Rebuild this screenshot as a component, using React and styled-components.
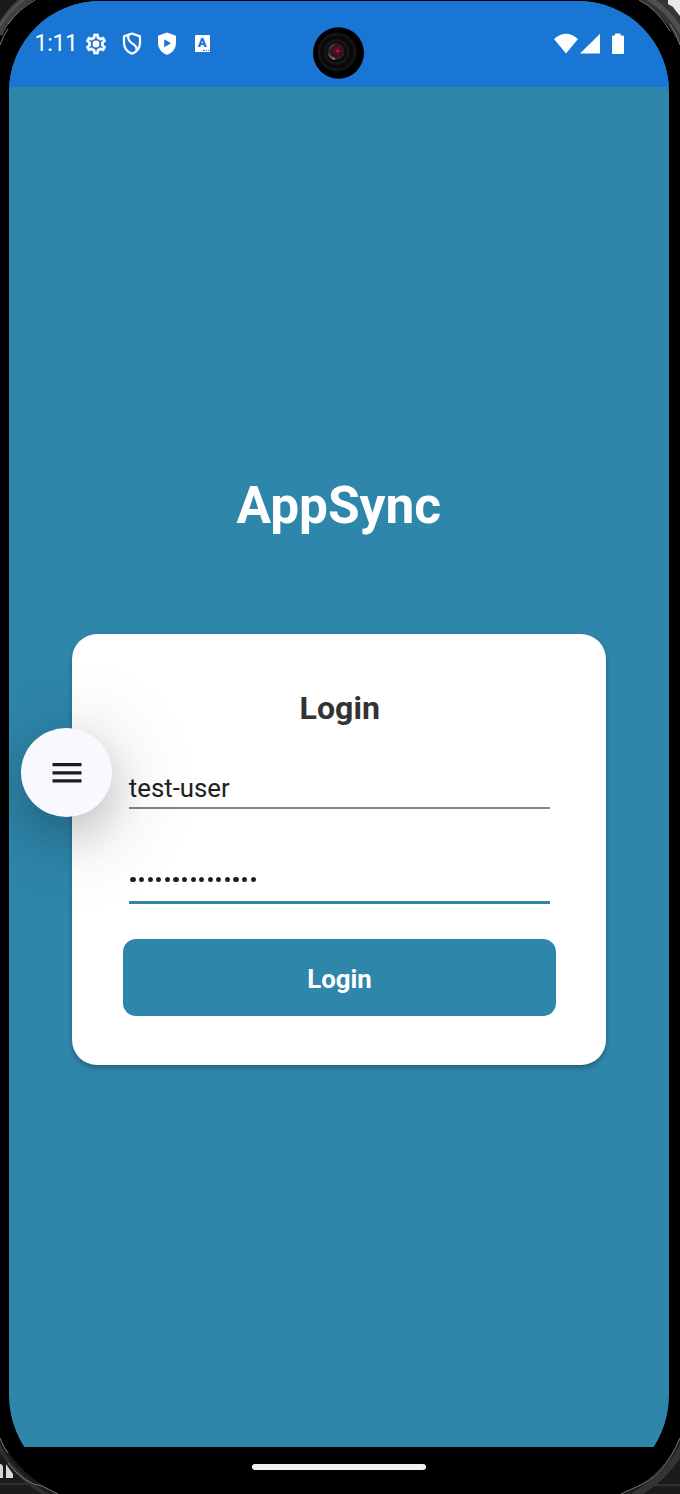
import React from "react";
import styled, { createGlobalStyle } from "styled-components";

const GlobalStyle = createGlobalStyle`
  * { box-sizing: border-box; }
  html, body { margin: 0; padding: 0; background: #000; overflow: hidden; }
  body { font-family: Roboto, "Liberation Sans", sans-serif; }
`;

const Device = styled.div`
  position: relative;
  width: 680px;
  height: 1494px;
  padding: 0.5px 11px 0 8.5px;
  background: #000;
  overflow: hidden;
`;

const Clip = styled.div`
  height: 1446.5px;
  overflow: hidden;
`;

const Screen = styled.div`
  display: flex;
  flex-direction: column;
  height: 1490px;
  border-radius: 91px 91px 96px 96px;
  overflow: hidden;
  background: #2e86ab;
`;

const StatusBar = styled.header`
  flex: none;
  display: flex;
  justify-content: space-between;
  height: 86.5px;
  padding: 30px 44px 0 26px;
  background: #1976d4;
  color: #fff;
`;

const StatusGroup = styled.div`
  display: flex;
  align-items: center;
  height: 26px;
  gap: ${(p) => p.$gap};
`;

const Clock = styled.span`
  font-size: 23px;
  line-height: 26px;
  height: 26px;
  width: 49.5px;
  letter-spacing: -0.3px;
`;

const Icon = styled.svg`
  display: block;
  flex: none;
  width: ${(p) => p.$w}px;
  height: ${(p) => p.$h}px;
`;

const Camera = styled.div`
  position: absolute;
  left: 313px;
  top: 27px;
  width: 51px;
  height: 52px;
`;

const Main = styled.main`
  display: flex;
  flex-direction: column;
  align-items: center;
`;

const Title = styled.h1`
  margin: 389px 0 0;
  height: 60px;
  line-height: 60px;
  font-size: 51.4px;
  font-weight: 700;
  color: #fff;
`;

const Card = styled.form`
  width: 533.5px;
  height: 431px;
  margin-top: 98.4px;
  padding: 54.4px 50px 0 50.5px;
  display: flex;
  flex-direction: column;
  border-radius: 25px;
  background: #fff;
  box-shadow: 0 3px 5px rgba(0, 0, 0, 0.26), 0 0 1px rgba(0, 0, 0, 0.1);
`;

const Heading = styled.h2`
  margin: 0;
  padding-left: 1.5px;
  height: 38px;
  line-height: 38px;
  text-align: center;
  font-size: 32.1px;
  font-weight: 700;
  color: #333;
`;

const Field = styled.div`
  display: flex;
  align-items: center;
  height: ${(p) => (p.$focused ? "56px" : "55px")};
  margin: ${(p) => (p.$focused ? "38.7px" : "27.2px")} 5.7px 0 6.3px;
  padding-top: ${(p) => (p.$focused ? "11px" : "16px")};
  border-bottom: ${(p) => (p.$focused ? "3px solid #2e86ab" : "2px solid #858585")};
  font-size: 25.8px;
  line-height: 30px;
  color: #212121;
`;

const Dots = styled.div`
  display: flex;
  gap: 3.4px;
  padding-left: 1.7px;
`;

const Dot = styled.i`
  width: 5.2px;
  height: 5.4px;
  border-radius: 50%;
  background: #1d1d1d;
`;

const SubmitButton = styled.button`
  height: 77.5px;
  margin: 35.2px 0 0;
  padding: 3px 0 0 1px;
  border: 0;
  border-radius: 13px;
  background: #2e86ab;
  color: #fff;
  font: 700 25.8px Roboto, "Liberation Sans", sans-serif;
`;

const FloatingLayer = styled.div`
  position: absolute;
  inset: 0;
  clip-path: inset(0 11px 47px 8.5px);
  pointer-events: none;
`;

const MenuBubble = styled.button`
  position: absolute;
  left: 21px;
  top: 727.5px;
  width: 91px;
  height: 89.5px;
  padding: 1px 0 0 0;
  border: 0;
  border-radius: 50%;
  display: flex;
  align-items: center;
  justify-content: center;
  background: #f9f8ff;
  box-shadow: 0 18px 38px rgba(0, 0, 0, 0.14), 0 14px 90px rgba(0, 0, 0, 0.24);
  pointer-events: auto;
`;

const NavBar = styled.footer`
  display: flex;
  justify-content: center;
  padding-top: 17px;
`;

const Handle = styled.div`
  width: 174px;
  height: 6px;
  border-radius: 3px;
  background: #f1f1f1;
`;

const Bezel = styled.svg`
  position: absolute;
  inset: 0;
  pointer-events: none;
`;

const GearIcon = () => (
  <Icon $w={24} $h={24} viewBox="0 0 24 24" fill="#fff">
    <path d="M19.43 12.98c.04-.32.07-.64.07-.98 0-.34-.03-.66-.07-.98l2.11-1.65c.19-.15.24-.42.12-.64l-2-3.46c-.09-.16-.26-.25-.44-.25-.06 0-.12.01-.17.03l-2.49 1c-.52-.4-1.08-.73-1.69-.98l-.38-2.65C14.46 2.18 14.25 2 14 2h-4c-.25 0-.46.18-.49.42l-.38 2.65c-.61.25-1.17.59-1.69.98l-2.49-1c-.06-.02-.12-.03-.18-.03-.17 0-.34.09-.43.25l-2 3.46c-.13.22-.07.49.12.64l2.11 1.65c-.04.32-.07.65-.07.98 0 .33.03.66.07.98l-2.11 1.65c-.19.15-.24.42-.12.64l2 3.46c.09.16.26.25.44.25.06 0 .12-.01.17-.03l2.49-1c.52.4 1.08.73 1.69.98l.38 2.65c.03.24.24.42.49.42h4c.25 0 .46-.18.49-.42l.38-2.65c.61-.25 1.17-.59 1.69-.98l2.49 1c.06.02.12.03.18.03.17 0 .34-.09.43-.25l2-3.46c.12-.22.07-.49-.12-.64l-2.11-1.65zm-1.98-1.71c.04.31.05.52.05.73 0 .21-.02.43-.05.73l-.14 1.13.89.7 1.08.84-.7 1.21-1.27-.51-1.04-.42-.9.68c-.43.32-.84.56-1.25.73l-1.06.43-.16 1.13-.2 1.35h-1.4l-.19-1.35-.16-1.13-1.06-.43c-.43-.18-.83-.41-1.23-.71l-.91-.7-1.06.43-1.27.51-.7-1.21 1.08-.84.89-.7-.14-1.13c-.03-.31-.05-.54-.05-.74s.02-.43.05-.73l.14-1.13-.89-.7-1.08-.84.7-1.21 1.27.51 1.04.42.9-.68c.43-.32.84-.56 1.25-.73l1.06-.43.16-1.13.2-1.35h1.39l.19 1.35.16 1.13 1.06.43c.43.18.83.41 1.23.71l.91.7 1.06-.43 1.27-.51.7 1.21-1.07.85-.89.7.14 1.13z" stroke="#fff" strokeWidth=".7" />
    <circle cx="12" cy="12" r="3.4" />
  </Icon>
);

const ShieldIcon = () => (
  <Icon $w={20} $h={23} viewBox="0 0 20 23" fill="none" stroke="#fff" strokeWidth="2.2">
    <path d="M10 1.5L18 4.4V10.5C18 16 15 19.8 10 21.7C5 19.8 2 16 2 10.5V4.4Z" strokeLinejoin="round" />
    <path d="M6.2 3.2V6.2Q6.5 8.5 9.2 10.7L13.1 13.7Q15.2 15.6 14.4 18.2" />
  </Icon>
);

const PlayShieldIcon = () => (
  <Icon $w={20} $h={23} viewBox="0 0 20 23">
    <path d="M10 .5L19 3.8V10.5C19 16.5 15.5 21 10 22.7C4.5 21 1 16.5 1 10.5V3.8Z" fill="#fff" />
    <path d="M7.2 7.2L14 11.2L7.2 15.2Z" fill="#1976d4" />
  </Icon>
);

const KeyboardLabel = styled.span`
  position: relative;
  width: 15px;
  height: 17px;
  margin-left: 2.2px;
  border-radius: 1px;
  background: #fff;
  color: #1976d4;
  font: 900 13px/15px Roboto, sans-serif;
  text-align: center;
  &::after {
    content: "";
    position: absolute;
    right: 1px;
    bottom: 1px;
    width: 6px;
    border-bottom: 1.3px dotted #1976d4;
  }
`;

function CameraLens() {
  return (
    <Camera>
      <Icon $w={51} $h={52} viewBox="0 0 51 52">
        <defs>
          <radialGradient id="lens" cx=".58" cy=".46" r=".58">
            <stop offset="0" stopColor="#b00f35" />
            <stop offset=".2" stopColor="#640b2d" />
            <stop offset=".5" stopColor="#35121f" />
            <stop offset="1" stopColor="#29272b" />
          </radialGradient>
          <linearGradient id="glint" x1="0" y1="0" x2="1" y2="1">
            <stop offset="0" stopColor="#3a3b40" />
            <stop offset="1" stopColor="#8a8288" />
          </linearGradient>
        </defs>
        <ellipse cx="25.5" cy="26" rx="25.5" ry="25.8" fill="#000" />
        <circle cx="24" cy="25" r="18" fill="#090909" stroke="#131313" strokeWidth="3" />
        <circle cx="23.5" cy="25" r="11.5" fill="#070707" stroke="#151515" strokeWidth="3" />
        <circle cx="23" cy="24.5" r="8.5" fill="url(#lens)" />
        <path d="M15.5 26A8 8 0 0 0 22 32" fill="none" stroke="url(#glint)" strokeWidth="1.8" />
        <path d="M17 22Q18 18.5 22 18" fill="none" stroke="#3f4147" strokeWidth="1.5" />
        <circle cx="24.7" cy="24" r="1" fill="#ed1f49" />
      </Icon>
    </Camera>
  );
}

function DeviceBezel() {
  return (
    <Bezel width="680" height="1494" viewBox="0 0 680 1494" fill="none">
      <path d="M0 0H29Q12 12 0 35Z" fill="#1b1b1b" />
      <path d="M30 -3Q10 9 -2 34" stroke="#404040" strokeWidth="9" />
      <path d="M27 -3Q10 8 -2 29" stroke="#565656" strokeWidth="2" />
      <path d="M35 0Q19 9 8 24M8 29Q3 36 0 45" stroke="#777" />

      <path d="M640 0H680V45Q665 15 640 0Z" fill="#353535" />
      <path d="M648 -2Q668 9 682 33" stroke="#505050" strokeWidth="5" />
      <path d="M668 0H680V16L676 11L673 7L668 4Z" fill="#e9e9e7" />
      <path d="M639 0Q657 9 670 31M670 24Q676 32 680 45" stroke="#777" />

      <path d="M0 1438Q19 1475 58 1494H0Z" fill="#1b1b1b" />
      <path d="M0 1484H31" stroke="#303030" strokeWidth="2" />
      <path d="M-3 1443Q14 1477 49 1496" stroke="#303030" strokeWidth="4" />
      <path d="M0 1464Q3 1464 3 1468V1478H0ZM6 1464L13 1474V1478H6Z" fill="#d6d6d6" />
      <path d="M0 1438Q3 1447 8 1453M8 1463Q24 1484 42 1486L58 1494" stroke="#777" />

      <path d="M680 1438Q661 1478 622 1494H680Z" fill="#1b1b1b" />
      <path d="M650 1485H680" stroke="#303030" strokeWidth="2" />
      <path d="M683 1446Q667 1478 633 1496" stroke="#343434" strokeWidth="7" />
      <path d="M680 1438Q664 1477 636 1487L621 1494" stroke="#777" />
    </Bezel>
  );
}

export default function App() {
  return (
    <>
      <GlobalStyle />
      <Device>
        <Clip>
          <Screen>
            <StatusBar>
              <StatusGroup $gap="0">
                <Clock>1:11</Clock>
                <StatusGroup $gap="13.5px">
                  <GearIcon />
                  <StatusGroup $gap="15.5px">
                    <ShieldIcon />
                    <PlayShieldIcon />
                    <KeyboardLabel>A</KeyboardLabel>
                  </StatusGroup>
                </StatusGroup>
              </StatusGroup>
              <StatusGroup $gap="0">
                <Icon $w={71} $h={22} viewBox="0 0 71 22" fill="#fff">
                  <path d="M0 6Q12 -4.5 24 6L12 20.5Z" />
                  <path d="M26 20.6L46 .8V20.6Z" />
                  <path d="M58 2.5H61V.5H66.5V2.5H69Q70 2.5 70 3.5V20Q70 21 69 21H59Q58 21 58 20V3.5Q58 2.5 59 2.5Z" />
                </Icon>
              </StatusGroup>
            </StatusBar>
            <Main>
              <Title>AppSync</Title>
              <Card onSubmit={(e) => e.preventDefault()}>
                <Heading>Login</Heading>
                <Field>test-user</Field>
                <Field $focused>
                  <Dots>
                    {Array.from({ length: 15 }, (_, i) => (
                      <Dot key={i} />
                    ))}
                  </Dots>
                </Field>
                <SubmitButton type="submit">Login</SubmitButton>
              </Card>
            </Main>
          </Screen>
        </Clip>
        <NavBar>
          <Handle />
        </NavBar>
        <FloatingLayer>
          <MenuBubble aria-label="Menu">
            <Icon $w={30} $h={20} viewBox="0 0 30 20" fill="#1c1b22">
              <path d="M.5 0H29.5V3.3H.5ZM.5 8.2H29.5V11.5H.5ZM.5 16.3H29.5V19.6H.5Z" />
            </Icon>
          </MenuBubble>
        </FloatingLayer>
        <CameraLens />
        <DeviceBezel />
      </Device>
    </>
  );
}
